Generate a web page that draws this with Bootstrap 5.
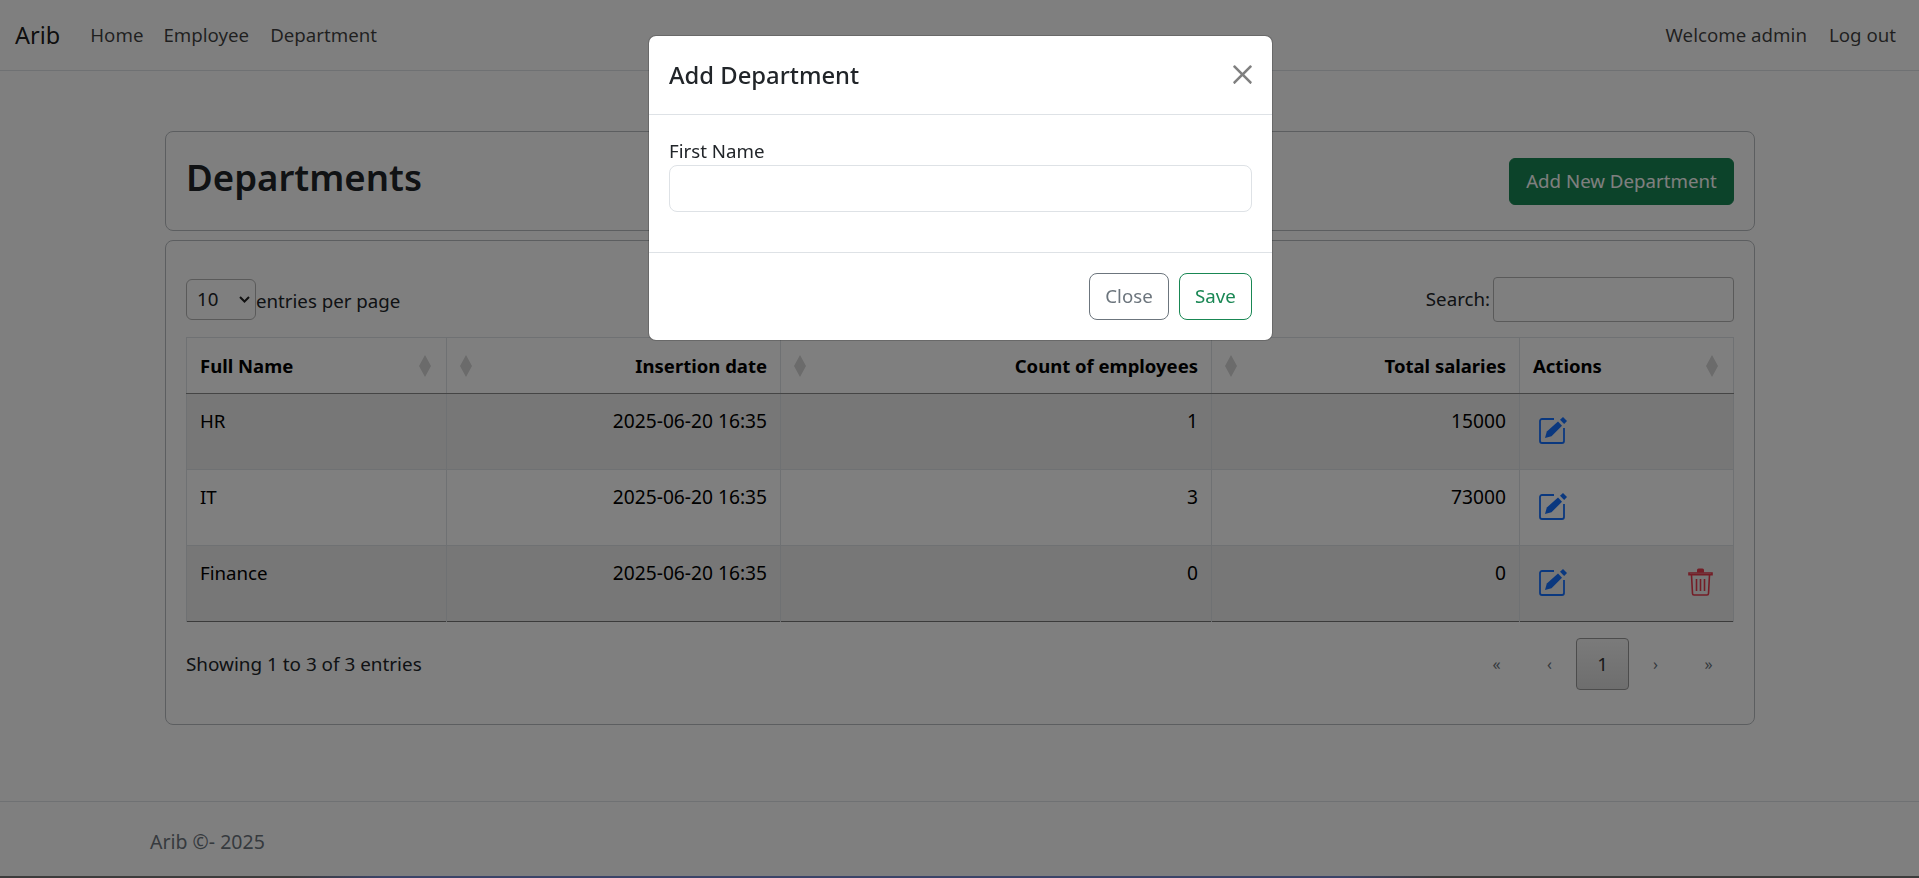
<!DOCTYPE html>
<html lang="en">
<head>
<meta charset="utf-8">
<title>Departments</title>
<link href="https://cdn.jsdelivr.net/npm/bootstrap@5.3.0/dist/css/bootstrap.min.css" rel="stylesheet">
<style>
html,body{height:878px;overflow:hidden}
body{font-family:"Noto Sans","Open Sans",sans-serif;font-size:18.7px;color:#212529;background:#fff}
.btn{--bs-btn-font-size:18.7px}
.form-control,.form-select{font-size:18.7px}
.top-bar{height:71px;background:#fff;border-bottom:1px solid #dee2e6;padding:1px 23px 0 15px}
.top-bar .navbar-brand{font-size:23.5px;color:rgba(0,0,0,.9);margin-right:20px;padding:0}
.top-bar .nav-link{color:rgba(0,0,0,.75);padding:8px 10px}
.top-bar .nav-link.welcome{padding-right:12px}
.top-bar .nav-link.dept-link{padding-left:11px}
.page-main{padding:60px 164px 0 165px}
.head-box{height:100px;padding:0 20px 0 20px;border:1px solid #b9bdc1;border-radius:8px;margin-bottom:9px}
.head-box h1{font-size:36.6px;font-weight:600;margin:0;position:relative;top:-3px}
.add-btn{height:47px;width:225px;padding:0;margin-top:1px}
.body-box{height:485px;padding:36px 20px 0;border:1px solid #b9bdc1;border-radius:8px}
.len-select{width:70px;height:41px;padding:0 0 0 10px;font-family:inherit;border-color:#b5b5b5;color:#212529;
  background-image:url("data:image/svg+xml,%3Csvg xmlns='http://www.w3.org/2000/svg' viewBox='0 0 11 7'%3E%3Cpath d='M1 1l4.5 4.5L10 1' fill='none' stroke='%23222' stroke-width='2'/%3E%3C/svg%3E");
  background-size:11px 7px;background-position:right 5px center}
.len-text{padding-top:4px}
.search-input{width:241px;height:45px;border-radius:4px;border-color:#b5b5b5;margin-left:3px}
.tbl-wrap{margin-top:15px}
.dept-table{width:100%;color:#000;table-layout:fixed;margin:0;border-bottom:1px solid #777}
.dept-table th,.dept-table td{padding:8px 13px;border-right:1px solid #dee2e6;position:relative;height:76px;vertical-align:top;line-height:28px}
.dept-table th{height:56px;border-top:1px solid #dee2e6;border-bottom:1px solid #8a8a8a;vertical-align:middle;font-weight:700;font-size:18.5px}
.dept-table td{border-bottom:1px solid #dee2e6;padding-top:13px}
.dept-table td.text-end{font-size:19.2px}
.dept-table tr>*:first-child{border-left:1px solid #dee2e6}
.dept-table tbody tr:nth-child(odd) td{background:#efefef}
.dept-table tbody tr:last-child td{border-bottom:0}
.sort-mark{position:absolute;top:50%;transform:translateY(-50%);width:12px;height:22px;fill:#d6d6d6}
.sort-l{left:13px}.sort-r{right:15px}
.act-cell{display:flex;justify-content:space-between;padding:9px 7px 0 6px}
.act-cell svg{display:block}
.foot-row span.info{font-size:18.9px}
.pager{margin-right:-1px}
.pager span{width:53px;height:52px;display:flex;align-items:center;justify-content:center;color:#6c757d;font-size:16px}
.pager .on{border:1px solid #999;border-radius:4px;background:linear-gradient(#f5f5f5,#dcdcdc);color:#333;font-size:18.7px}
.page-foot{position:absolute;left:0;right:0;top:801px;height:75px;border-top:1px solid #dee2e6;padding:25px 150px 0;color:#6c757d;font-size:19.5px}
.foot-strip{position:absolute;left:0;right:0;bottom:0;height:2px;z-index:1060;background:linear-gradient(90deg,#3c3c3c 15%,#3b4468 20%,#3b4468 70%,#3c3c3c 75%)}
.dept-modal{--bs-modal-bg:#fff;z-index:1055}
.dlg{margin:35px 0 0 648px;width:625px;max-width:none}
.dlg .modal-content{border-radius:8px}
.dlg .modal-header{height:79px;padding:0 20px;flex:none}
.dlg .modal-title{font-size:23.8px;font-weight:500;line-height:1.2}
.dlg .modal-body{height:137px;padding:22px 20px 0;flex:none}
.dlg label{display:block;line-height:28px}
.dlg .form-control{height:47px;border-radius:8px}
.dlg .modal-footer{padding:0 20px;height:88px;gap:10px;flex-wrap:nowrap;align-items:center}
.dlg .modal-footer .btn{height:47px;margin:0;padding:0;border-radius:8px}
.dlg .modal-footer .close-btn{width:80px}
.dlg .modal-footer .save-btn{width:73px}
.dlg .btn-close{width:21px;height:21px;padding:0;margin:-2px -1px 0 0;background-size:21px;opacity:.5}
</style>
</head>
<body>
<nav class="top-bar d-flex align-items-center justify-content-between">
  <div class="d-flex align-items-center">
    <a class="navbar-brand" href="#">Arib</a>
    <a class="nav-link" href="#">Home</a>
    <a class="nav-link" href="#">Employee</a>
    <a class="nav-link dept-link" href="#">Department</a>
  </div>
  <div class="d-flex align-items-center">
    <span class="nav-link welcome">Welcome admin</span>
    <a class="nav-link pe-0" href="#">Log out</a>
  </div>
</nav>
<main class="page-main">
  <section class="head-box d-flex align-items-center justify-content-between">
    <h1>Departments</h1>
    <button class="btn btn-success add-btn" type="button">Add New Department</button>
  </section>
  <section class="body-box">
    <div class="d-flex align-items-center justify-content-between">
      <label class="d-flex align-items-center"><select class="form-select len-select"><option>10</option></select><span class="len-text">entries per page</span></label>
      <label class="d-flex align-items-center">Search:<input class="form-control search-input" type="text"></label>
    </div>
    <div class="tbl-wrap">
      <table class="dept-table">
        <colgroup><col style="width:260px"><col style="width:334px"><col style="width:431px"><col style="width:308px"><col style="width:214px"></colgroup>
        <thead><tr>
          <th>Full Name<svg class="sort-mark sort-r" viewBox="0 0 12 22"><path d="M6 0 12 11 6 22 0 11z"/></svg></th>
          <th class="text-end"><svg class="sort-mark sort-l" viewBox="0 0 12 22"><path d="M6 0 12 11 6 22 0 11z"/></svg>Insertion date</th>
          <th class="text-end"><svg class="sort-mark sort-l" viewBox="0 0 12 22"><path d="M6 0 12 11 6 22 0 11z"/></svg>Count of employees</th>
          <th class="text-end"><svg class="sort-mark sort-l" viewBox="0 0 12 22"><path d="M6 0 12 11 6 22 0 11z"/></svg>Total salaries</th>
          <th>Actions<svg class="sort-mark sort-r" viewBox="0 0 12 22"><path d="M6 0 12 11 6 22 0 11z"/></svg></th>
        </tr></thead>
        <tbody>
          <tr><td>HR</td><td class="text-end">2025-06-20 16:35</td><td class="text-end">1</td><td class="text-end">15000</td><td><div class="act-cell"><svg width="29" height="28" viewBox="0 0 29 28"><path d="M15 3H3a2 2 0 0 0-2 2v20a2 2 0 0 0 2 2h20a2 2 0 0 0 2-2V12" fill="none" stroke="#1570ff" stroke-width="1.8"/><path d="M6 22l1.8-6.5L19 5.5l4 4.2L12.5 20.3z" fill="#1570ff"/><path d="M21 3.7l3-2.7 4 4-2.8 3z" fill="#1570ff"/></svg></div></td></tr>
          <tr><td>IT</td><td class="text-end">2025-06-20 16:35</td><td class="text-end">3</td><td class="text-end">73000</td><td><div class="act-cell"><svg width="29" height="28" viewBox="0 0 29 28"><path d="M15 3H3a2 2 0 0 0-2 2v20a2 2 0 0 0 2 2h20a2 2 0 0 0 2-2V12" fill="none" stroke="#1570ff" stroke-width="1.8"/><path d="M6 22l1.8-6.5L19 5.5l4 4.2L12.5 20.3z" fill="#1570ff"/><path d="M21 3.7l3-2.7 4 4-2.8 3z" fill="#1570ff"/></svg></div></td></tr>
          <tr><td>Finance</td><td class="text-end">2025-06-20 16:35</td><td class="text-end">0</td><td class="text-end">0</td><td><div class="act-cell"><svg width="29" height="28" viewBox="0 0 29 28"><path d="M15 3H3a2 2 0 0 0-2 2v20a2 2 0 0 0 2 2h20a2 2 0 0 0 2-2V12" fill="none" stroke="#1570ff" stroke-width="1.8"/><path d="M6 22l1.8-6.5L19 5.5l4 4.2L12.5 20.3z" fill="#1570ff"/><path d="M21 3.7l3-2.7 4 4-2.8 3z" fill="#1570ff"/></svg><svg width="25" height="28" viewBox="0 0 25 28"><g fill="none" stroke="#e83a4c" stroke-width="1.6"><path d="M1 5h23v1.8H1z"/><path d="M3.5 7l1 18.5a1.5 1.5 0 0 0 1.5 1.5h13a1.5 1.5 0 0 0 1.5-1.5l1-18.5"/><path d="M8.5 11v12M12.5 11v12M16.5 11v12"/></g><path d="M9 4.5V2a1.5 1.5 0 0 1 1.5-1.5h4A1.5 1.5 0 0 1 16 2v2.5z" fill="#e83a4c"/></svg></div></td></tr>
        </tbody>
      </table>
    </div>
    <div class="foot-row d-flex align-items-center justify-content-between mt-3">
      <span class="info">Showing 1 to 3 of 3 entries</span>
      <div class="pager d-flex"><span>«</span><span>‹</span><span class="on">1</span><span>›</span><span>»</span></div>
    </div>
  </section>
</main>
<footer class="page-foot">Arib ©- 2025</footer>
<div class="modal-backdrop fade show"></div>
<div class="modal dept-modal d-block">
  <div class="dlg modal-dialog">
    <div class="modal-content">
      <div class="modal-header">
        <h5 class="modal-title">Add Department</h5>
        <button type="button" class="btn-close" aria-label="Close"></button>
      </div>
      <div class="modal-body">
        <label>First Name</label>
        <input class="form-control" type="text">
      </div>
      <div class="modal-footer">
        <button class="btn btn-outline-secondary close-btn" type="button">Close</button>
        <button class="btn btn-outline-success save-btn" type="button">Save</button>
      </div>
    </div>
  </div>
</div>
<div class="foot-strip"></div>
<script src="https://cdn.jsdelivr.net/npm/bootstrap@5.3.0/dist/js/bootstrap.bundle.min.js"></script>
</body>
</html>
